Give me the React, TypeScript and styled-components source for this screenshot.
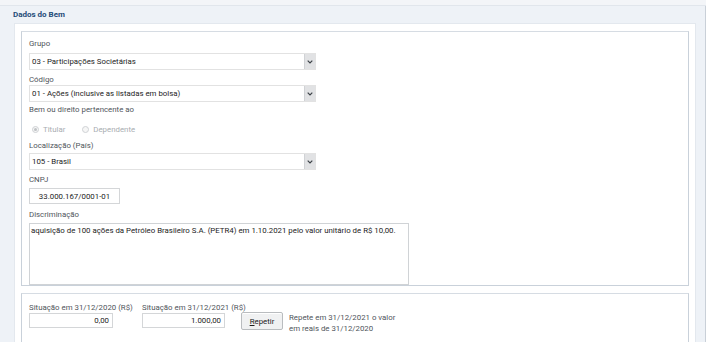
import React from "react";
import styled, { createGlobalStyle } from "styled-components";

const Global = createGlobalStyle`
  html, body { margin: 0; padding: 0; }
  body { font-family: Roboto, "Liberation Sans", Arial, sans-serif; }
`;

const Page = styled.div`
  width: 706px;
  height: 342px;
  overflow: hidden;
  background: #eef2f7;
  font-family: Roboto, "Liberation Sans", Arial, sans-serif;
  font-size: 7.85px;
  box-sizing: border-box;
`;

const TopStrip = styled.div`
  height: 5px;
  background: #f3f5f8;
  border-bottom: 1px solid #e1e6ec;
`;

const Main = styled.div`
  border-right: 1px solid #c9d0d8;
  height: 336px;
  box-sizing: border-box;
`;

const Title = styled.div`
  height: 17px;
  line-height: 17px;
  padding-left: 13px;
  font-weight: 700;
  font-size: 8px;
  color: #1f4c78;
`;

const OuterPanel = styled.div`
  margin-left: 14px;
  width: 682px;
  box-sizing: border-box;
  background: #ffffff;
  border: 1px solid #e3e8ee;
  border-bottom: none;
  padding: 7px 6px 0 6px;
  height: 320px;
`;

const Box = styled.div<{ $h?: number; $pt: number }>`
  box-sizing: border-box;
  border: 1px solid #c9d1da;
  border-top-color: #d6dce3;
  ${(p) => (p.$h ? `height: ${p.$h}px;` : "height: 60px;")}
  overflow: hidden;
  padding: ${(p) => p.$pt}px 7px 0 7px;
  display: flex;
  flex-direction: column;
  align-items: flex-start;
  & + & {
    margin-top: 7px;
  }
`;

const Label = styled.div<{ $mt?: number; $mb?: number }>`
  line-height: 11px;
  height: 11px;
  color: #4f555b;
  white-space: nowrap;
  margin-top: ${(p) => p.$mt ?? 0}px;
  margin-bottom: ${(p) => p.$mb ?? 0}px;
`;

const Select = styled.div`
  width: 287px;
  height: 17px;
  box-sizing: border-box;
  border: 1px solid #e2e2e2;
  display: flex;
  align-items: center;
  color: #1c1c1c;
  background: #fff;
`;

const SelectText = styled.span`
  flex: 1;
  padding-left: 2px;
  white-space: nowrap;
`;

const DropButton = styled.span`
  width: 11px;
  height: 15px;
  box-sizing: border-box;
  background: #e1e2e4;
  border-left: 1px solid #d0d2d5;
  display: flex;
  align-items: center;
  justify-content: center;
`;

const RadioRow = styled.div`
  display: flex;
  align-items: center;
  height: 14px;
  margin-top: 7px;
  padding-left: 3px;
  gap: 4px;
`;

const RadioItem = styled.span`
  display: inline-flex;
  align-items: center;
  gap: 4px;
  color: #a9adb1;
  margin-right: 13px;
`;

const RadioCircle = styled.span<{ $on?: boolean }>`
  width: 7px;
  height: 7px;
  box-sizing: border-box;
  border-radius: 50%;
  border: 1px solid #cfd2d5;
  background: #f6f6f6;
  display: inline-flex;
  align-items: center;
  justify-content: center;
  &::after {
    content: "";
    width: 3px;
    height: 3px;
    border-radius: 50%;
    background: ${(p) => (p.$on ? "#bfc2c5" : "transparent")};
  }
`;

const TextInput = styled.div<{ $w: number; $h: number; $align: string }>`
  width: ${(p) => p.$w}px;
  height: ${(p) => p.$h}px;
  box-sizing: border-box;
  border: 1px solid #d4d6d8;
  color: #1c1c1c;
  display: flex;
  align-items: center;
  justify-content: ${(p) => p.$align};
  padding: 0 3px;
  white-space: nowrap;
  background: #fff;
`;

const TextArea = styled.div`
  width: 380px;
  height: 62px;
  box-sizing: border-box;
  border: 1px solid #d0d3d6;
  color: #1c1c1c;
  padding: 1px 1px;
  line-height: 11px;
  white-space: nowrap;
`;

const ValuesGrid = styled.div`
  display: grid;
  grid-template-columns: 113px 99px 48px auto;
  grid-template-rows: 11px auto;
  align-items: start;
`;

const GridLabel = styled.div`
  line-height: 11px;
  color: #4f555b;
  white-space: nowrap;
`;

const Button = styled.button`
  width: 42px;
  height: 18px;
  margin-top: -1px;
  box-sizing: border-box;
  border: 1px solid #b9bcbf;
  border-radius: 2px;
  background: #f0f1f2;
  box-shadow: inset 0 1px 0 #fff;
  font-family: inherit;
  font-size: 7.85px;
  color: #1c1c1c;
  padding: 0;
  & u {
    text-decoration: underline;
  }
`;

const Hint = styled.div`
  line-height: 11px;
  color: #4f555b;
  margin-top: -1px;
  white-space: nowrap;
`;

const Chevron = () => (
  <svg width="6" height="4" viewBox="0 0 6 4">
    <path d="M0.7 0.7 L3 3 L5.3 0.7" fill="none" stroke="#3c4247" strokeWidth="1.2" />
  </svg>
);

const SelectField = ({ value }: { value: string }) => (
  <Select>
    <SelectText>{value}</SelectText>
    <DropButton>
      <Chevron />
    </DropButton>
  </Select>
);

export default function App() {
  return (
    <Page>
      <Global />
      <TopStrip />
      <Main>
        <Title>Dados do Bem</Title>
        <OuterPanel>
          <Box $h={255} $pt={6}>
            <Label $mb={4}>Grupo</Label>
            <SelectField value="03 - Participações Societárias" />
            <Label $mt={4}>Código</Label>
            <SelectField value="01 - Ações (inclusive as listadas em bolsa)" />
            <Label $mt={2}>Bem ou direito pertencente ao</Label>
            <RadioRow>
              <RadioItem>
                <RadioCircle $on />
                Titular
              </RadioItem>
              <RadioItem>
                <RadioCircle />
                Dependente
              </RadioItem>
            </RadioRow>
            <Label $mt={4} $mb={2}>Localização (País)</Label>
            <SelectField value="105 - Brasil" />
            <Label $mt={4} $mb={3}>CNPJ</Label>
            <TextInput $w={91} $h={16} $align="center">33.000.167/0001-01</TextInput>
            <Label $mt={5} $mb={3}>Discriminação</Label>
            <TextArea>
              aquisição de 100 ações da Petróleo Brasileiro S.A. (PETR4) em 1.10.2021 pelo valor unitário de R$ 10,00.
            </TextArea>
          </Box>
          <Box $h={60} $pt={8}>
            <ValuesGrid>
              <GridLabel>Situação em 31/12/2020 (R$)</GridLabel>
              <GridLabel>Situação em 31/12/2021 (R$)</GridLabel>
              <span />
              <span />
              <TextInput $w={84} $h={15} $align="flex-end">0,00</TextInput>
              <TextInput $w={83} $h={15} $align="flex-end">1.000,00</TextInput>
              <Button>
                <u>R</u>epetir
              </Button>
              <Hint>
                Repete em 31/12/2021 o valor
                <br />
                em reais de 31/12/2020
              </Hint>
            </ValuesGrid>
          </Box>
        </OuterPanel>
      </Main>
    </Page>
  );
}
